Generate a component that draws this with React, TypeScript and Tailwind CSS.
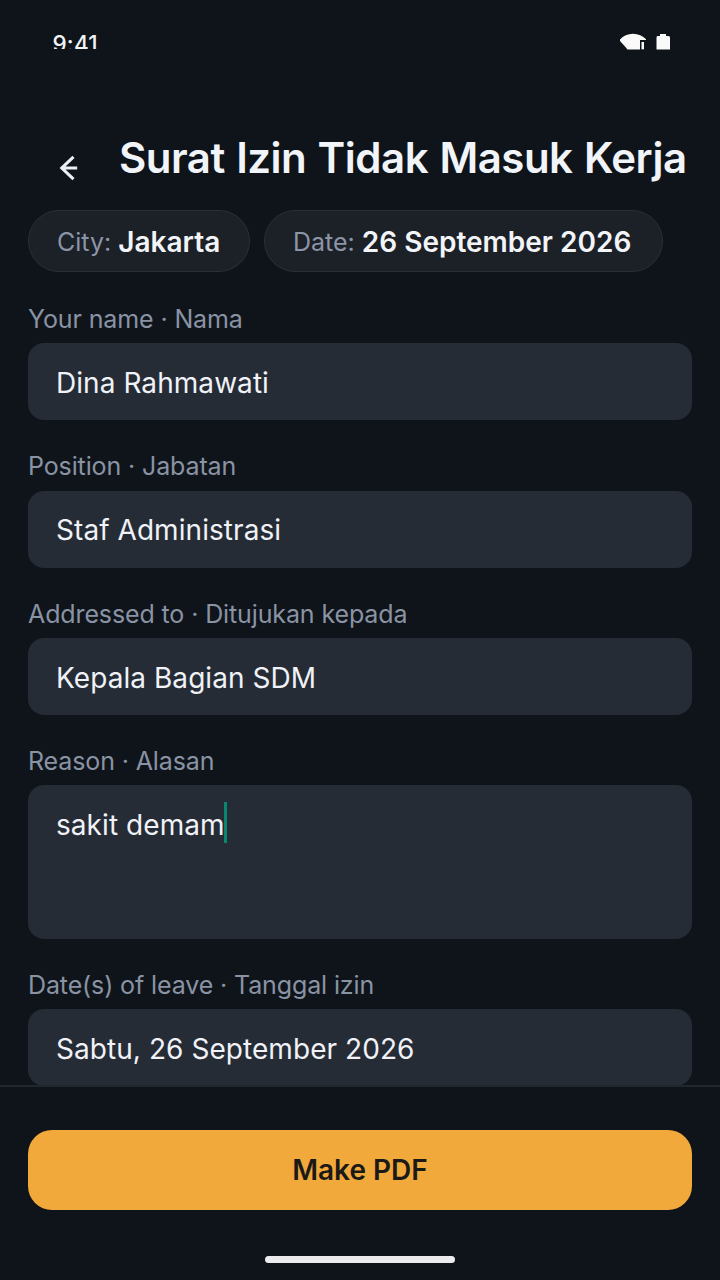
import React from "react";

function Chip({ label, value, width }: { label: string; value: string; width: string }) {
  return (
    <div className={`flex h-[62px] shrink-0 items-center whitespace-nowrap rounded-full border-[1.5px] border-[#2b3033] bg-[#1c2027] pl-[28px] pt-px ${width}`}>
      <span className="mt-[2px] text-[25px] text-[#8c95a8]">{label}</span>
      <span className="ml-[7px] text-[28px] font-semibold text-[#f2f4f8]">{value}</span>
    </div>
  );
}

function Field({ label, value, area, focused }: { label: string; value: string; area?: boolean; focused?: boolean }) {
  return (
    <div className="shrink-0 pb-[30px]">
      <div className="flex h-[40.35px] items-start whitespace-nowrap text-[25px] leading-[32px] tracking-[-0.12px] text-[#8993a4]">
        {label}
      </div>
      <div className={`flex items-start rounded-[16px] bg-[#252c36] px-[28px] pt-[18px] ${area ? "h-[153.6px]" : "h-[77px]"}`}>
        <span className="mt-[1.5px] whitespace-nowrap text-[28px] leading-[41px] tracking-[0.06px] text-[#f0f2f7]">{value}</span>
        {focused && <span className="-ml-px -mt-px h-[41px] w-[3.5px] bg-[#078770]" />}
      </div>
    </div>
  );
}

export default function App() {
  return (
    <div className="flex h-[1280px] w-[720px] flex-col overflow-hidden bg-[#0f141a] font-['Inter',sans-serif]">
      <div className="flex h-[140px] shrink-0 items-start justify-between pl-[52.5px] pr-[50px] pt-[32px]">
        <div className="h-[17px] overflow-hidden text-[22.5px] font-medium leading-[24px] tracking-[0.2px] text-[#f1f3f6] [font-feature-settings:'calt'_0]">
          9:41
        </div>
        <svg width="52" height="18" viewBox="0 0 52 18" fill="#fafafa">
          <path d="M2 7.5Q7 2 15 1.8Q23 2 28 7.3V8H22V17.6H9.5L7 14.5L2 9Z" />
          <path d="M23.5 10H26V17.3H23.5Z" />
          <path d="M39.5 4H42V2H48V4H50.5Q52 4 52 5.5V17.6H38.5V5.5Q38.5 4 39.5 4Z" />
        </svg>
      </div>

      <header className="flex h-[70px] shrink-0 items-start pl-[58px]">
        <svg className="mt-[14px]" width="20" height="28" viewBox="0 0 20 28" fill="none" stroke="#eceff3" strokeWidth="3.1">
          <path d="M15.5 2.8L3.8 14L15.5 25.2M3.5 14H19.2" />
        </svg>
        <h1 className="ml-[41px] whitespace-nowrap text-[42px] font-semibold leading-[36px] tracking-[-0.5px] text-[#f1f4f8] [word-spacing:1.3px]">
          Surat Izin Tidak Masuk Kerja
        </h1>
      </header>

      <main className="flex min-h-0 flex-1 flex-col overflow-hidden px-[28px]">
        <div className="flex shrink-0 gap-[14px] pb-[31.1px]">
          <Chip label="City:" value="Jakarta" width="w-[222px]" />
          <Chip label="Date:" value="26 September 2026" width="w-[399px]" />
        </div>
        <Field label="Your name · Nama" value="Dina Rahmawati" />
        <Field label="Position · Jabatan" value="Staf Administrasi" />
        <Field label="Addressed to · Ditujukan kepada" value="Kepala Bagian SDM" />
        <Field label="Reason · Alasan" value="sakit demam" area focused />
        <Field label="Date(s) of leave · Tanggal izin" value="Sabtu, 26 September 2026" />
      </main>

      <footer className="flex h-[195px] shrink-0 flex-col items-center border-t-2 border-[#22272c] px-[28px] pt-[42.5px]">
        <button className="h-[80.5px] w-full rounded-[24px] bg-[#f2a93b] pt-px text-[28px] font-semibold text-[#1b1a17]">
          Make PDF
        </button>
        <div className="mt-[46px] h-[7px] w-[190px] rounded-full bg-[#ececee]" />
      </footer>
    </div>
  );
}
